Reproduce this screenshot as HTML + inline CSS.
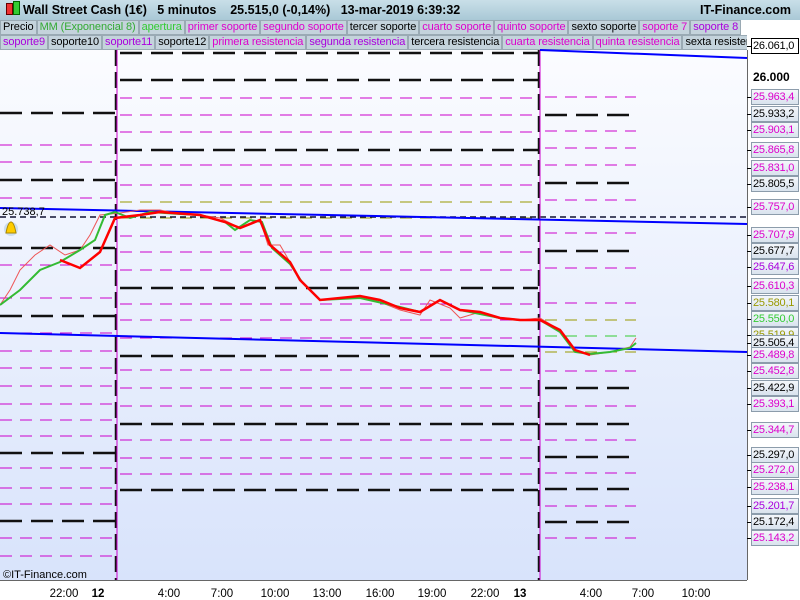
<!DOCTYPE html>
<html><head><meta charset="utf-8"><style>
body{margin:0;width:800px;height:600px;overflow:hidden;font-family:"Liberation Sans",sans-serif;background:#fff;position:relative}
#title{position:absolute;left:0;top:0;width:800px;height:20px;background:linear-gradient(#c9dfe8,#a9c8d6);font-size:12.5px;font-weight:bold;line-height:20px}
.leg{position:absolute;left:0;height:15px;font-size:11px;line-height:13px;white-space:nowrap;display:flex;overflow:hidden;letter-spacing:-0.1px}
.leg span{background:#c4d3dc;border:1px solid #9aaab4;padding:0 2px;height:13px;flex:none}
.pl{position:absolute;left:751px;width:45px;height:14px;font-size:11px;line-height:14px;padding-left:1px;background:linear-gradient(#f4f7fb,#d9e3ee);border:1px solid #8c9cab;letter-spacing:-0.2px;z-index:2}
.pl:before{content:"";position:absolute;left:-5px;top:7px;width:4px;border-top:1px solid #000}
.m{color:#d0c}.p{color:#a0d}.o{color:#990}.g{color:#3c3}
</style></head><body>
<div id="title"><span style="position:absolute;left:6px;top:3px;width:5px;height:10px;background:#e33;border:1px solid #600"></span><span style="position:absolute;left:13px;top:1px;width:5px;height:12px;background:#3c3;border:1px solid #060"></span>
<span style="position:absolute;left:23px">Wall Street Cash (1€)&nbsp;&nbsp;&nbsp;5 minutos&nbsp;&nbsp;&nbsp;&nbsp;25.515,0 (-0,14%)&nbsp;&nbsp;&nbsp;13-mar-2019 6:39:32</span><span style="position:absolute;right:9px">IT-Finance.com</span></div>
<div class="leg" style="top:20px;width:760px"><span>Precio</span><span style="color:#3a3">MM (Exponencial 8)</span><span style="color:#3c3">apertura</span><span class="m">primer soporte</span><span class="m">segundo soporte</span><span>tercer soporte</span><span class="m">cuarto soporte</span><span class="m">quinto soporte</span><span>sexto soporte</span><span class="m">soporte 7</span><span class="p">soporte 8</span></div>
<div class="leg" style="top:35px;width:747px"><span class="p">soporte9</span><span>soporte10</span><span class="p">soporte11</span><span>soporte12</span><span class="m">primera resistencia</span><span class="p">segunda resistencia</span><span>tercera resistencia</span><span class="m">cuarta resistencia</span><span class="m">quinta resistencia</span><span>sexta resistencia</span></div>
<svg width="800" height="600" style="position:absolute;left:0;top:0" font-family="Liberation Sans" font-size="11">
<defs><linearGradient id="g" x1="0" y1="0" x2="0" y2="1"><stop offset="0" stop-color="#fbfcff"/><stop offset="1" stop-color="#d8e3fb"/></linearGradient></defs>
<rect x="0" y="50" width="747" height="530" fill="url(#g)"/>
<rect x="748" y="50" width="52" height="530" fill="#fff"/>
<line x1="747.5" y1="50" x2="747.5" y2="580" stroke="#666"/>
<line x1="0" y1="580.5" x2="747" y2="580.5" stroke="#666"/>
<g fill="none" stroke-dasharray="12,8">
<g stroke="#c0c" stroke-width="1">
<path d="M0 145H115M0 162H115M0 198H115M0 265H115M0 298H115M0 333H115M0 351H115M0 368H115M0 386H115M0 404H115M0 420H115M0 436H115M0 468H115M0 488H115M0 504H115M0 538H115M0 556H115"/>
<path d="M120 98H538M120 115H538M120 132H538M120 165H538M120 185H538M120 236H538M120 252H538M120 270H538M120 304H538M120 320H538M120 338H538M120 370H538M120 388H538M120 406H538M120 440H538M120 458H538M120 474H538"/>
<path d="M545 97H636M545 131H636M545 148H636M545 165H636M545 200H636M545 233H636M545 268H636M545 303H636M545 371H636M545 406H636M545 440H636M545 473H636M545 506H636M545 538H636"/>
</g>
<g stroke="#990" stroke-width="1"><path d="M120 202H538M120 218H538M545 320H636M545 352H636"/></g>
<g stroke="#3c3" stroke-width="1"><path d="M545 336H636"/></g>
<g stroke="#111" stroke-width="2.5" stroke-dasharray="22,9">
<path d="M0 113H115M0 180H115M0 248H115M0 316H115M0 453H115M0 521H115"/>
<path d="M120 53H538M120 80H538M120 150H538M120 288H538M120 356H538M120 424H538M120 490H538"/>
<path d="M545 115H636M545 183H636M545 251H636M545 388H636M545 424H636M545 457H636M545 489H636M545 522H636"/>
</g>
<path d="M0 217H747" stroke="#113" stroke-width="1.5" stroke-dasharray="6,4"/>
</g>
<path d="M116 50V580M539 50V580" stroke="#111" stroke-width="2.5" stroke-dasharray="16,6"/>
<path d="M117 50V580M540 50V580" stroke="#c0c" stroke-width="1"/>
<g stroke="#00f" stroke-width="2" fill="none"><path d="M0 208L747 224M0 333L747 352M540 50L747 58"/></g>
<polyline fill="none" stroke="#e55" stroke-width="1" points="0,305 10,290 20,270 35,255 50,245 65,255 80,250 90,235 100,215 120,213 140,210 160,210 180,214 200,215 220,218 240,228 260,220 268,245 280,245 290,262 300,280 320,300 340,298 360,296 380,302 400,310 420,315 430,300 450,308 460,318 480,312 500,318 520,320 540,318 560,330 575,350 590,355 610,352 630,347 636,338"/>
<polyline fill="none" stroke="#3b3" stroke-width="2" points="0,305 20,290 40,270 60,262 80,250 95,240 105,215 115,212 130,218 150,212 180,214 200,215 225,222 235,230 250,220 262,222 272,248 290,264 302,282 320,300 360,298 400,307 420,312 440,300 460,310 480,314 500,318 520,320 540,320 560,332 575,352 590,354 610,352 630,348 636,343"/>
<polyline fill="none" stroke="#f00" stroke-width="2.5" points="60,260 80,268 100,252 115,218 140,215 160,212 200,215 225,222 240,228 260,220 270,245 290,262 300,280 320,300 340,298 360,296 380,300 400,308 420,312 440,300 460,310 480,312 500,318 520,320 540,320 560,330 575,350 590,355"/>
<text x="2" y="215" fill="#000">25.738,7</text>
<circle cx="11" cy="229" r="7" fill="#cde"/><path d="M6 233Q8 222 11 222Q14 222 16 233Z" fill="#fc0" stroke="#a80"/>
<text x="3" y="578" fill="#000">©IT-Finance.com</text>
<text x="753" y="81" fill="#000" font-weight="bold" font-size="12">26.000</text>
<g fill="#000" text-anchor="middle" font-size="11.5"><text x="64" y="597">22:00</text><text x="98" y="597" font-weight="bold">12</text><text x="169" y="597">4:00</text><text x="222" y="597">7:00</text><text x="275" y="597">10:00</text><text x="327" y="597">13:00</text><text x="380" y="597">16:00</text><text x="432" y="597">19:00</text><text x="485" y="597">22:00</text><text x="520" y="597" font-weight="bold">13</text><text x="591" y="597">4:00</text><text x="643" y="597">7:00</text><text x="696" y="597">10:00</text></g>
</svg>
<div class="pl" style="top:38px;background:#fff;border-color:#000">26.061,0</div>
<div class="pl m" style="top:89px">25.963,4</div>
<div class="pl" style="top:106px">25.933,2</div>
<div class="pl m" style="top:122px">25.903,1</div>
<div class="pl m" style="top:142px">25.865,8</div>
<div class="pl m" style="top:160px">25.831,0</div>
<div class="pl" style="top:176px">25.805,5</div>
<div class="pl m" style="top:199px">25.757,0</div>
<div class="pl m" style="top:227px">25.707,9</div>
<div class="pl" style="top:243px">25.677,7</div>
<div class="pl p" style="top:259px">25.647,6</div>
<div class="pl m" style="top:278px">25.610,3</div>
<div class="pl o" style="top:295px">25.580,1</div>
<div class="pl g" style="top:311px">25.550,0</div>
<div class="pl o" style="top:327px">25.519,9</div>
<div class="pl" style="top:335px">25.505,4</div>
<div class="pl m" style="top:347px">25.489,8</div>
<div class="pl m" style="top:363px">25.452,8</div>
<div class="pl" style="top:380px">25.422,9</div>
<div class="pl m" style="top:396px">25.393,1</div>
<div class="pl m" style="top:422px">25.344,7</div>
<div class="pl" style="top:447px">25.297,0</div>
<div class="pl m" style="top:462px">25.272,0</div>
<div class="pl m" style="top:479px">25.238,1</div>
<div class="pl p" style="top:498px">25.201,7</div>
<div class="pl" style="top:514px">25.172,4</div>
<div class="pl m" style="top:530px">25.143,2</div>
</body></html>
